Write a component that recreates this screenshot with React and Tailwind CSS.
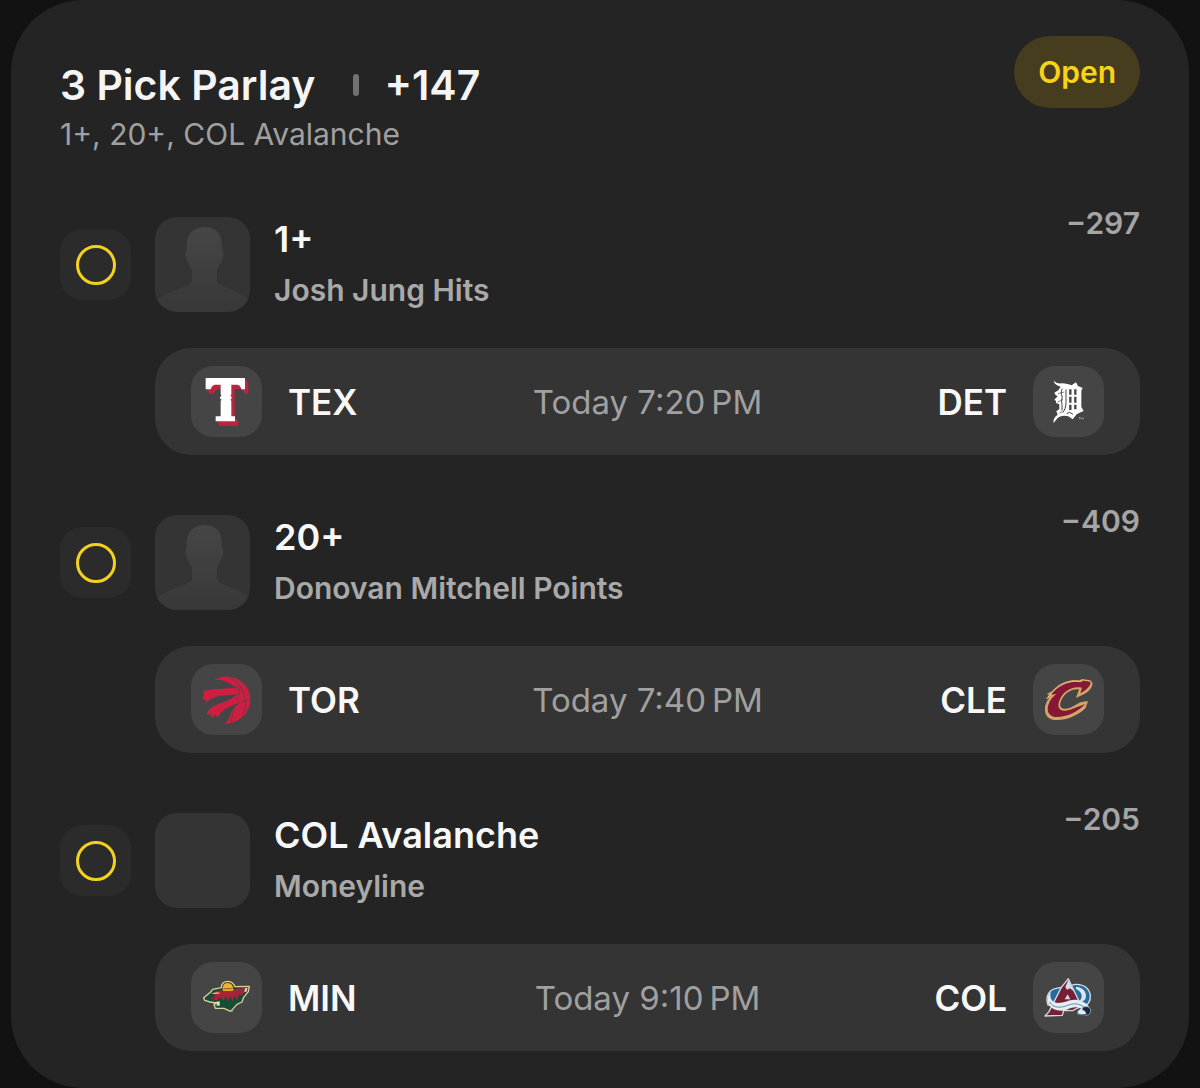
import React, { useId } from "react";

function RangersLogo() {
  const shape =
    "M62 54H180V88H169Q167 76 157 74H139V102Q139 105 136 107Q140 109 140 113Q140 117 136 119Q139 121 139 124V169H150V184H92V169H107V124Q107 121 110 119Q105 117 105 113Q105 109 110 107Q107 105 107 102V74H90Q80 76 77 88H62Z";
  return (
    <g>
      <path d={shape} fill="#bd2440" transform="translate(10 13)" />
      <path d={shape} fill="#bd2440" transform="translate(6 7)" />
      <path d={shape} fill="#fff" />
    </g>
  );
}

function TigersLogo() {
  return (
    <g>
      <path
        fill="#fff"
        d="M80 61C85 70 96 71 106 70C116 70 126 73 134 76L147 67L153 78L167 84L163 92V141L170 153L158 158L149 163L137 178L124 169C109 165 95 168 87 180L80 189C78 178 84 169 92 164L88 154L97 147V133L87 129V123L82 119L92 109L85 104L82 98L94 91L101 80C91 78 81 72 80 61Z"
      />
      <g fill="none" stroke="#454545" strokeWidth="3">
        <path d="M106 86C101 95 102 103 106 111C102 120 105 126 105 137V152" />
        <path d="M117 88V128C117 143 112 151 107 158" />
        <path d="M130 88V104M130 110V128M130 134V150" strokeWidth="7" />
        <path d="M145 88V104M145 110V128M145 134V148" strokeWidth="7" />
        <path d="M119 161L128 157L138 163" />
        <path d="M93 101L112 96M91 127L108 118M97 159L105 155" strokeWidth="2" />
      </g>
      <path d="M155 173H161M158 173V178M163 178V173L166 176L169 173V178" stroke="#ccc" strokeWidth="1.5" fill="none" />
    </g>
  );
}

function RaptorsLogo() {
  return (
    <g>
      <path
        fill="#ce1f43"
        d="M88 66C109 53 141 51 163 67C191 84 204 118 191 150C181 178 151 198 118 197C127 190 133 181 136 170C142 150 157 140 170 133C157 136 144 142 131 148C116 154 107 163 99 177L91 170L82 179L77 169L65 170C69 155 81 145 96 140C119 131 141 124 157 108C138 112 118 111 99 115C84 118 73 124 65 134L61 123L51 125L57 111L54 102C68 92 91 94 111 92C130 90 145 91 160 88C139 84 126 68 108 66C101 65 95 66 88 66Z"
      />
      <g fill="none" stroke="#454545" strokeWidth="2">
        <path d="M132 57C158 68 180 99 181 132C182 154 174 176 163 188" />
        <path d="M160 88C164 100 162 115 155 126M150 145C145 160 140 175 140 193" />
        <path d="M179 80C172 86 166 89 160 91" />
        <path d="M196 123C186 126 178 129 170 133" />
      </g>
    </g>
  );
}

function CavaliersLogo() {
  return (
    <g strokeLinejoin="round">
      <path
        fill="#d0a569"
        d="M57 124L66 110L59 108L75 100C91 80 114 69 139 66L158 67L165 63L190 67L197 76C195 91 183 105 164 112L147 120L156 94C130 91 108 110 101 132C95 150 108 157 130 149L160 133L183 129L176 150C151 174 117 188 84 186C62 184 52 170 54 149C55 138 60 128 67 119Z"
      />
      <path
        fill="#861735"
        d="M75 105C94 83 118 72 142 71L161 72L169 67L187 70L191 76C188 87 177 97 160 106L165 89L157 88C127 86 104 106 96 131C89 153 104 163 127 156L175 138C152 163 115 179 84 177C66 174 58 159 64 141C69 125 79 115 88 108L74 110Z"
      />
      <path
        fill="none"
        stroke="#edcf96"
        strokeWidth="2"
        d="M59 122L74 106C94 83 118 72 142 70L161 71L169 67L187 69"
      />
    </g>
  );
}

function WildLogo() {
  return (
    <g strokeLinejoin="round">
      <path
        d="M56 125L77 108L83 100L109 95C109 79 120 76 129 76C142 77 148 86 150 92L193 91L190 107L176 124L171 138L156 145L137 166L117 157L91 157L87 146L94 141L75 138L59 133Z"
        fill="#164d36"
        stroke="#d9cf9d"
        strokeWidth="4"
      />
      <path d="M74 131L91 119L84 113L93 106L114 103L151 99L186 96L178 110L166 119L163 114L156 132L148 120L142 136L136 120L129 136L122 120L116 134L105 123L95 134L86 128Z" fill="#a82338" />
      <path d="M113 106C109 87 118 80 128 80C140 80 148 91 145 106Z" fill="#e8b627" stroke="#573f20" strokeWidth="2" />
      <path d="M116 98H143" stroke="#915725" strokeWidth="3" />
      <path d="M77 112L98 109L107 112L90 114Z" fill="#d9ce97" />
      <path d="M89 139L104 136L104 149L91 148L98 144Z" fill="#eee5bc" />
      <path d="M180 97L188 96L184 108L178 107Z" fill="#e6d9ab" />
      <circle cx="142" cy="165" r="2" fill="#b2ae8c" />
    </g>
  );
}

function AvalancheLogo() {
  return (
    <g strokeLinejoin="round">
      <path d="M63 147C54 124 65 100 88 97L145 85C174 84 190 101 190 121C190 139 180 151 162 155L125 153Z" fill="#286a9e" stroke="#d4dde6" strokeWidth="4" />
      <path d="M148 92C170 94 182 112 175 129C170 136 162 138 156 136C170 125 166 107 146 98Z" fill="#d9e6ef" />
      <path d="M54 180L66 167L103 94L124 68L151 125L163 150L137 164L110 163L106 178Z" fill="#762038" stroke="#d1d8dd" strokeWidth="4" />
      <path d="M124 72L142 107L129 97L120 101L115 93Z" fill="#d5dfe6" />
      <path d="M122 115L130 130H113Z" fill="#d2dce3" />
      <path d="M72 106C66 124 74 140 92 141C116 141 128 128 151 132C171 135 184 146 190 160L183 173L154 176C147 169 155 160 164 158C145 149 132 156 119 161C98 169 76 161 66 147C59 134 61 119 72 106Z" fill="#e5edf2" />
      <path d="M68 137C78 158 102 156 122 148C143 139 163 144 177 158" fill="none" stroke="#5d91b6" strokeWidth="3" />
      <path d="M166 155C176 149 188 151 191 162C192 172 184 179 176 178C178 171 175 164 166 163Z" fill="#182738" stroke="#bac9d5" strokeWidth="2" />
      <path d="M150 169C156 178 169 180 179 177" fill="none" stroke="#2d6897" strokeWidth="3" />
      <circle cx="191" cy="131" r="2" fill="#aaa" />
    </g>
  );
}

const logos = {
  TEX: RangersLogo,
  DET: TigersLogo,
  TOR: RaptorsLogo,
  CLE: CavaliersLogo,
  MIN: WildLogo,
  COL: AvalancheLogo,
};

function TeamTile({ team }) {
  const Logo = logos[team];
  return (
    <div className="size-[71px] shrink-0 overflow-hidden rounded-[22px] bg-[#454545]">
      <svg viewBox="18 18 213 213" className="size-full" role="img" aria-label={team}>
        <Logo />
      </svg>
    </div>
  );
}

function Avatar({ silhouette }) {
  const id = useId();
  return (
    <div className="size-[95px] shrink-0 overflow-hidden rounded-[22px] bg-[#343434]">
      {silhouette && (
        <svg viewBox="345 50 287 286" className="size-full" aria-hidden="true">
          <defs>
            <linearGradient id={id} x1="0" y1="0" x2="0" y2="1">
              <stop offset="0" stopColor="#464646" />
              <stop offset="1" stopColor="#383838" />
            </linearGradient>
          </defs>
          <path
            fill={`url(#${id})`}
            d="M495 80C523 80 542 96 546 122L547 147C553 150 553 166 548 177C546 184 544 189 541 192C537 201 533 205 532 213V246C540 257 559 262 578 270C602 279 622 292 632 309V336H345V305C364 289 387 277 411 269C430 262 450 256 457 245V211C452 202 449 196 447 187C438 180 435 160 440 149L442 122C446 96 467 80 495 80Z"
          />
        </svg>
      )}
    </div>
  );
}

function Pick({ title, market, odds, away, home, time, silhouette }) {
  return (
    <li>
      <div className="flex items-center">
        <div className="flex size-[71px] shrink-0 items-center justify-center rounded-[22px] bg-[#2b2b2b]">
          <span className="size-10 rounded-full border-3 border-[#f2d21f]" />
        </div>
        <div className="ml-6 shrink-0">
          <Avatar silhouette={silhouette} />
        </div>
        <div className="ml-6 grow">
          <h2 className="text-[36px] leading-[44px] font-semibold text-[#f8f8f8]">{title}</h2>
          <p className="mt-[7px] text-[30px] leading-[44px] font-semibold text-[#a9a9a9]">{market}</p>
        </div>
        <p className="-mt-3 self-start text-[30px] leading-[36px] font-semibold text-[#a5a5a5]">{odds}</p>
      </div>
      <div className="mt-9 ml-[95px] grid grid-cols-[1fr_auto_1fr] items-center rounded-[36px] bg-[#343434] px-9 py-[18px]">
        <div className="flex items-center gap-[26px]">
          <TeamTile team={away} />
          <span className="text-[35px] leading-[48px] font-semibold text-[#f8f8f8]">{away}</span>
        </div>
        <span className="text-[33px] leading-[48px] text-[#a0a0a0]">{time}</span>
        <div className="flex items-center justify-end gap-[26px]">
          <span className="text-[35px] leading-[48px] font-semibold text-[#f8f8f8]">{home}</span>
          <TeamTile team={home} />
        </div>
      </div>
    </li>
  );
}

const picks = [
  { title: "1+", market: "Josh Jung Hits", odds: "−297", away: "TEX", home: "DET", time: "Today 7:20\u2009PM", silhouette: true },
  { title: "20+", market: "Donovan Mitchell Points", odds: "−409", away: "TOR", home: "CLE", time: "Today 7:40\u2009PM", silhouette: true },
  { title: "COL Avalanche", market: "Moneyline", odds: "−205", away: "MIN", home: "COL", time: "Today 9:10\u2009PM", silhouette: false },
];

export default function App() {
  return (
    <main className="min-h-screen bg-[#121212] px-[11px] font-[Inter,sans-serif]">
      <article className="rounded-[72px] bg-[#242424] px-[49px] pt-9 pb-[37px]">
        <header className="flex items-start justify-between">
          <div className="pt-6">
            <div className="flex items-center text-[41px] leading-[50px] font-semibold text-[#f5f5f5]">
              <h1>3 Pick Parlay</h1>
              <span className="mr-[25px] ml-[38px] h-[22px] w-[6px] rounded-full bg-[#727272]" />
              <span>+147</span>
            </div>
            <p className="text-[30px] leading-[48px] text-[#a0a0a0]">1+, 20+, COL Avalanche</p>
          </div>
          <span className="rounded-full bg-[#453d1e] px-6 py-[14px] text-[30px] leading-[44px] font-semibold text-[#f9d318]">
            Open
          </span>
        </header>
        <ul className="mt-[59px] flex flex-col gap-[60px]">
          {picks.map((pick) => (
            <Pick key={pick.title} {...pick} />
          ))}
        </ul>
      </article>
    </main>
  );
}
